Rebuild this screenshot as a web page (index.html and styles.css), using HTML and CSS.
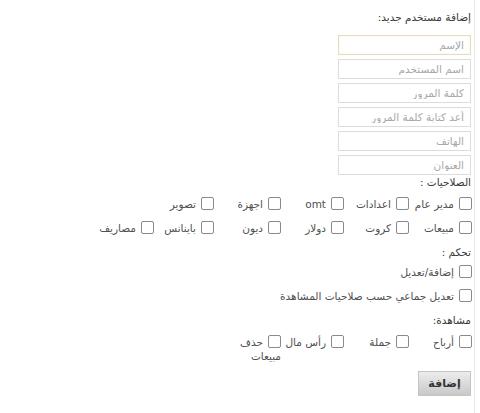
FILE: index.html
```html
<!DOCTYPE html>
<html lang="ar" dir="rtl">
<head>
<meta charset="utf-8">
<link rel="stylesheet" href="styles.css">
</head>
<body>
<div class="page">
  <div class="title">إضافة مستخدم جديد:</div>
  <div class="fields">
    <input class="field focused" type="text" placeholder="الإسم">
    <input class="field" type="text" placeholder="اسم المستخدم">
    <input class="field" type="password" placeholder="كلمة المرور">
    <input class="field" type="password" placeholder="أعد كتابة كلمة المرور">
    <input class="field" type="text" placeholder="الهاتف">
    <input class="field" type="text" placeholder="العنوان">
  </div>
  <div class="section">الصلاحيات :</div>
  <div class="grid perms">
    <label class="item"><input type="checkbox" class="cb">مدير عام</label>
    <label class="item"><input type="checkbox" class="cb">اعدادات</label>
    <label class="item"><input type="checkbox" class="cb">omt</label>
    <label class="item"><input type="checkbox" class="cb">اجهزة</label>
    <label class="item"><input type="checkbox" class="cb">تصوير</label>
    <span class="item"></span>
    <label class="item"><input type="checkbox" class="cb">مبيعات</label>
    <label class="item"><input type="checkbox" class="cb">كروت</label>
    <label class="item"><input type="checkbox" class="cb">دولار</label>
    <label class="item"><input type="checkbox" class="cb">ديون</label>
    <label class="item"><input type="checkbox" class="cb">باينانس</label>
    <label class="item"><input type="checkbox" class="cb">مصاريف</label>
  </div>
  <div class="section">تحكم :</div>
  <div class="list">
    <label class="item"><input type="checkbox" class="cb">إضافة/تعديل</label>
    <label class="item"><input type="checkbox" class="cb">تعديل جماعي حسب صلاحيات المشاهدة</label>
  </div>
  <div class="section">مشاهدة:</div>
  <div class="grid views">
    <label class="item"><input type="checkbox" class="cb">أرباح</label>
    <label class="item"><input type="checkbox" class="cb">جملة</label>
    <label class="item"><input type="checkbox" class="cb">رأس مال</label>
    <label class="item"><input type="checkbox" class="cb">حذف مبيعات</label>
  </div>
  <div class="actions">
    <button class="btn" type="button">إضافة</button>
  </div>
</div>
</body>
</html>
```

FILE: styles.css
```css
html, body {
  margin: 0;
  padding: 0;
  background: #ffffff;
}
body {
  direction: rtl;
  font-family: "DejaVu Sans", "Liberation Sans", sans-serif;
  font-size: 10.5px;
  color: #3a3a3a;
}
.page {
  margin-right: 5px;
  border-right: 1px solid #e6e6e6;
  padding: 10px 2px 0 0;
  min-height: 403px;
}
.title {
  line-height: 14px;
  margin-bottom: 11px;
  margin-right: 1px;
}
.fields {
  display: flex;
  flex-direction: column;
  align-items: flex-start;
  gap: 4px;
  margin-right: 1px;
}
.field {
  box-sizing: border-box;
  width: 133px;
  height: 20px;
  border: 1px solid #dcdcdc;
  padding: 0 6px;
  font-family: inherit;
  font-size: 10.5px;
  direction: rtl;
  outline: none;
  background: #fff;
}
.field::placeholder {
  color: #a8a8a8;
}
.field.focused {
  border-color: #e6dcb8;
  box-shadow: inset 0 0 2px #f5efd8;
}
.section {
  line-height: 14px;
  margin-right: 1px;
}
.grid {
  display: grid;
  grid-template-columns: 63px 65px 63px 67px 60px 60px;
  justify-content: start;
  row-gap: 10px;
  margin-top: 8px;
}
.perms {
  margin-bottom: 10px;
}
.views {
  margin-bottom: 8px;
}
.item {
  display: block;
  line-height: 14px;
  color: #505050;
}
.cb {
  -webkit-appearance: none;
  appearance: none;
  box-sizing: border-box;
  width: 13px;
  height: 13px;
  border: 1px solid #8a8a8a;
  border-radius: 2px;
  background: #fff;
  margin: 0 0 0 5px;
  vertical-align: -2px;
}
.list {
  display: flex;
  flex-direction: column;
  gap: 10px;
  margin-top: 6px;
  margin-bottom: 10px;
}
.btn {
  box-sizing: border-box;
  width: 53px;
  height: 25px;
  border: 1px solid #c4c4c4;
  background: linear-gradient(#ececec, #c9c9c9);
  font-family: inherit;
  font-size: 11px;
  font-weight: bold;
  color: #333;
  padding: 0;
  margin-right: 1px;
}
```
